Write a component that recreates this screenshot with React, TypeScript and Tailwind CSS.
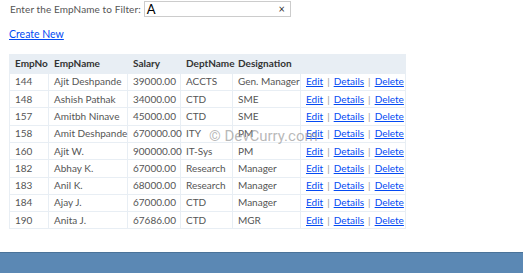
import React from "react";

const rows = [
  ["144", "Ajit Deshpande", "39000.00", "ACCTS", "Gen. Manager"],
  ["148", "Ashish Pathak", "34000.00", "CTD", "SME"],
  ["157", "Amitbh Ninave", "45000.00", "CTD", "SME"],
  ["158", "Amit Deshpande", "670000.00", "ITY", "PM"],
  ["160", "Ajit W.", "900000.00", "IT-Sys", "PM"],
  ["182", "Abhay K.", "67000.00", "Research", "Manager"],
  ["183", "Anil K.", "68000.00", "Research", "Manager"],
  ["184", "Ajay J.", "67000.00", "CTD", "Manager"],
  ["190", "Anita J.", "67686.00", "CTD", "MGR"],
];

const cell = "border border-[#e8eef4] pl-[5px] pr-[2px] h-[17.3px] whitespace-nowrap overflow-visible";

export default function App() {
  return (
    <div
      className="relative w-[523px] h-[273px] bg-white text-[10px] text-[#555] overflow-hidden"
      style={{ fontFamily: "Lato, 'Open Sans', sans-serif" }}
    >
      <div className="flex items-center pl-[10px] pt-[1px] gap-[3px]">
        <span className="text-[#555] text-[10px] tracking-[0.1px]">Enter the EmpName to Filter:</span>
        <div className="flex items-center justify-between w-[147px] h-[16px] border border-[#ccc] px-[2px]">
          <span className="text-[13px] text-black leading-none">A</span>
          <span className="text-[11px] text-[#333] pr-[3px]">×</span>
        </div>
      </div>
      <div className="pl-[9px] pt-[10px]">
        <a className="text-[#034af3] underline text-[10.5px]">Create New</a>
      </div>
      <table className="ml-[9px] mt-[11px] border-collapse table-fixed w-[396px]">
        <colgroup>
          <col className="w-[39px]" />
          <col className="w-[79px]" />
          <col className="w-[53px]" />
          <col className="w-[52px]" />
          <col className="w-[68px]" />
          <col className="w-[105px]" />
        </colgroup>
        <thead>
          <tr className="bg-[#e8eef4] text-[#333] font-bold text-left">
            <th className={`${cell} h-[19px]`}>EmpNo</th>
            <th className={`${cell} h-[19px]`}>EmpName</th>
            <th className={`${cell} h-[19px]`}>Salary</th>
            <th className={`${cell} h-[19px]`}>DeptName</th>
            <th className={`${cell} h-[19px]`}>Designation</th>
            <th className={`${cell} h-[19px]`}></th>
          </tr>
        </thead>
        <tbody>
          {rows.map((r) => (
            <tr key={r[0]}>
              {r.map((c, i) => (
                <td key={i} className={cell}>
                  {c}
                </td>
              ))}
              <td className={`${cell} pl-[4px]`}>
                <a className="text-[#034af3] underline">Edit</a>
                <span className="text-[#999] px-[4px]">|</span>
                <a className="text-[#034af3] underline">Details</a>
                <span className="text-[#999] px-[4px]">|</span>
                <a className="text-[#034af3] underline">Delete</a>
              </td>
            </tr>
          ))}
        </tbody>
      </table>
      <div
        className="absolute left-[209px] top-[125px] text-[15px] text-[#999]/70"
        style={{ fontFamily: "Roboto, sans-serif" }}
      >
        © DevCurry.com
      </div>
      <div className="absolute left-0 right-0 bottom-0 h-[21px] bg-[#5b88b4] border-t border-[#4a7399]"></div>
    </div>
  );
}
